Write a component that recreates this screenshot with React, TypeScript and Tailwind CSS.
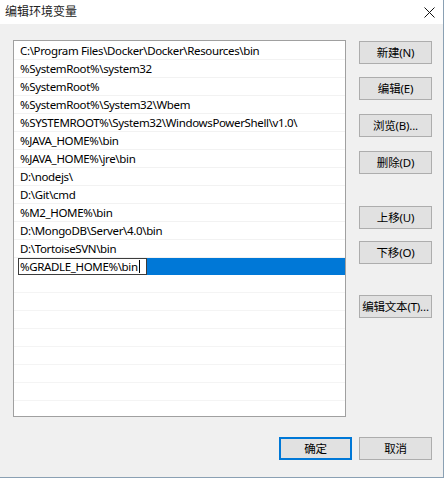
import React from "react";

const rows = [
  "C:\\Program Files\\Docker\\Docker\\Resources\\bin",
  "%SystemRoot%\\system32",
  "%SystemRoot%",
  "%SystemRoot%\\System32\\Wbem",
  "%SYSTEMROOT%\\System32\\WindowsPowerShell\\v1.0\\",
  "%JAVA_HOME%\\bin",
  "%JAVA_HOME%\\jre\\bin",
  "D:\\nodejs\\",
  "D:\\Git\\cmd",
  "%M2_HOME%\\bin",
  "D:\\MongoDB\\Server\\4.0\\bin",
  "D:\\TortoiseSVN\\bin",
];

const font = { fontFamily: '"Noto Sans", "Noto Sans CJK SC", sans-serif' };

function Btn({ label, mt, primary }: { label: string; mt: string; primary?: boolean }) {
  return (
    <div
      className={
        "w-[73px] h-[23px] flex items-center justify-center text-[11.5px] tracking-[-0.2px] whitespace-nowrap text-black bg-[#e1e1e1] " +
        (primary ? "border-2 border-[#0078d7] " : "border border-[#adadad] ") +
        mt
      }
    >
      {label}
    </div>
  );
}

export default function App() {
  return (
    <div className="w-[446px] h-[478px] bg-white flex" style={font}>
      <div className="w-[444px] h-[478px] flex flex-col border-r border-b border-[#8aa0b3]">
        <div className="h-[24px] bg-white flex items-center justify-between pl-[5px] pr-[8px] shrink-0">
          <span className="text-[12px] text-[#222] leading-none">编辑环境变量</span>
          <svg width="11" height="11" viewBox="0 0 11 11">
            <path d="M0.5 0.5 L10.5 10.5 M10.5 0.5 L0.5 10.5" stroke="#111" strokeWidth="1" />
          </svg>
        </div>
        <div className="flex-1 bg-[#f0f0f0] flex flex-col relative">
          <div className="flex mt-[16px] ml-[13px]">
            <div className="w-[333px] h-[377px] bg-white border border-[#a0a0a0] pt-[1px] overflow-hidden">
              {rows.map((r) => (
                <div
                  key={r}
                  className="h-[18px] flex items-center pl-[6px] text-[11.5px] tracking-[-0.35px] text-black border-b border-[#f2f2f2] leading-none whitespace-nowrap"
                >
                  {r}
                </div>
              ))}
              <div className="h-[17px] flex ml-[4px]">
                <div className="w-[129px] h-[17px] bg-white border border-[#3c3c3c] flex items-center pl-[1px] text-[11.5px] tracking-[-0.35px] text-black leading-none whitespace-nowrap">
                  %GRADLE_HOME%\bin
                  <span className="inline-block w-[1px] h-[13px] bg-black ml-[1px]" />
                </div>
                <div className="flex-1 bg-[#0078d7]" />
              </div>
              {[0, 1, 2, 3, 4, 5, 6, 7].map((i) => (
                <div key={i} className="h-[18px] border-b border-[#f4f4f4]" />
              ))}
            </div>
            <div className="ml-[13px] flex flex-col">
              <Btn label="新建(N)" mt="mt-[1px]" />
              <Btn label="编辑(E)" mt="mt-[13px]" />
              <Btn label="浏览(B)..." mt="mt-[14px]" />
              <Btn label="删除(D)" mt="mt-[14px]" />
              <Btn label="上移(U)" mt="mt-[32px]" />
              <Btn label="下移(O)" mt="mt-[12px]" />
              <Btn label="编辑文本(T)..." mt="mt-[31px]" />
            </div>
          </div>
          <div className="flex mt-[20px] ml-[279px] gap-[7px]">
            <Btn label="确定" mt="" primary />
            <Btn label="取消" mt="" />
          </div>
        </div>
      </div>
    </div>
  );
}
